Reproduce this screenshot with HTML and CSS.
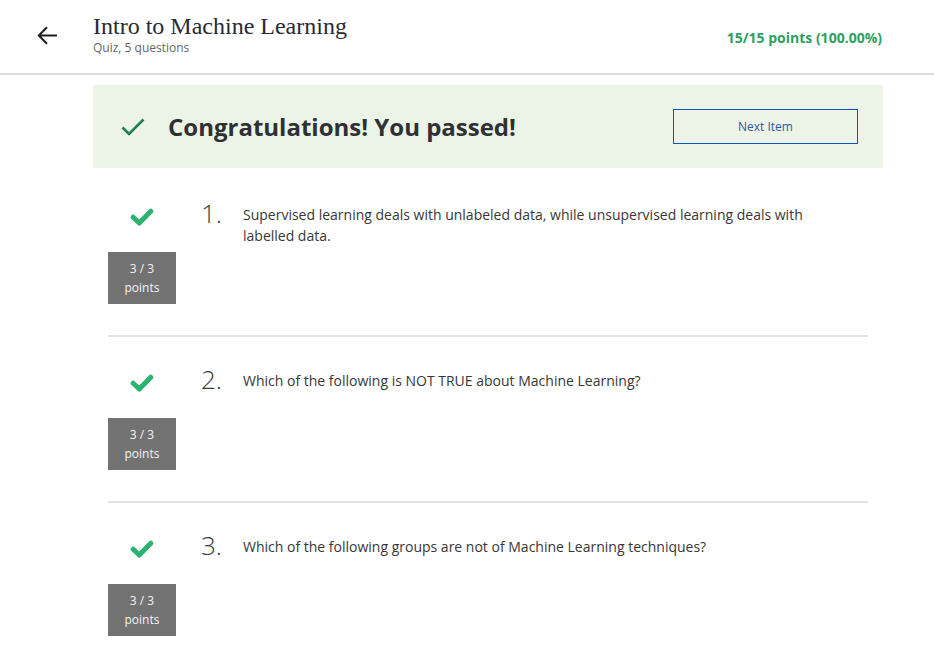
FILE: index.html
```html
<!DOCTYPE html>
<html lang="en">
<head>
<meta charset="utf-8">
<title>Intro to Machine Learning</title>
<link rel="stylesheet" href="styles.css">
</head>
<body>
<header class="topbar">
  <a class="back" href="#" aria-label="Back">
    <svg width="20" height="20" viewBox="0 0 20 20"><path d="M10 1.2 L1.8 9.5 L10 17.8 M1.8 9.5 H20" fill="none" stroke="#1f1f1f" stroke-width="2"/></svg>
  </a>
  <div class="titles">
    <h1 class="title">Intro to Machine Learning</h1>
    <div class="subtitle">Quiz, 5 questions</div>
  </div>
  <div class="score">15/15 points (100.00%)</div>
</header>

<main class="content">
  <section class="banner">
    <svg class="banner-check" width="24" height="18" viewBox="0 0 24 18"><polyline points="1.5,9.5 8,16 22.5,1.5" fill="none" stroke="#1f7f4f" stroke-width="2.6"/></svg>
    <h2 class="banner-text">Congratulations! You passed!</h2>
    <button class="next-btn" type="button">Next Item</button>
  </section>

  <div class="questions">
    <div class="question">
      <div class="q-side">
        <div class="q-icon"><svg width="24" height="18" viewBox="0 0 24 18"><polyline points="3.2,9.2 9.3,15 20.8,3.2" fill="none" stroke="#2bb370" stroke-width="5" stroke-linecap="round" stroke-linejoin="round"/></svg></div>
        <div class="q-points">3 / 3<br>points</div>
      </div>
      <div class="q-body">
        <div class="q-num">1.</div>
        <div class="q-text">Supervised learning deals with unlabeled data, while unsupervised learning deals with labelled data.</div>
      </div>
    </div>
    <div class="question">
      <div class="q-side">
        <div class="q-icon"><svg width="24" height="18" viewBox="0 0 24 18"><polyline points="3.2,9.2 9.3,15 20.8,3.2" fill="none" stroke="#2bb370" stroke-width="5" stroke-linecap="round" stroke-linejoin="round"/></svg></div>
        <div class="q-points">3 / 3<br>points</div>
      </div>
      <div class="q-body">
        <div class="q-num">2.</div>
        <div class="q-text">Which of the following is NOT TRUE about Machine Learning?</div>
      </div>
    </div>
    <div class="question">
      <div class="q-side">
        <div class="q-icon"><svg width="24" height="18" viewBox="0 0 24 18"><polyline points="3.2,9.2 9.3,15 20.8,3.2" fill="none" stroke="#2bb370" stroke-width="5" stroke-linecap="round" stroke-linejoin="round"/></svg></div>
        <div class="q-points">3 / 3<br>points</div>
      </div>
      <div class="q-body">
        <div class="q-num">3.</div>
        <div class="q-text">Which of the following groups are not of Machine Learning techniques?</div>
      </div>
    </div>
  </div>
</main>
</body>
</html>
```
FILE: styles.css
```css
* { box-sizing: border-box; }
html, body { margin: 0; padding: 0; background: #fff; }
body {
  font-family: "Open Sans", "Liberation Sans", sans-serif;
  color: #333;
  width: 934px;
  height: 646px;
  overflow: hidden;
}

.topbar {
  display: flex;
  align-items: flex-start;
  height: 75px;
  padding: 12px 52px 0 37px;
  border-bottom: 2px solid #dcdcdc;
}
.back {
  display: block;
  width: 20px;
  height: 20px;
  margin-top: 14px;
  margin-right: 36px;
}
.back svg { display: block; }
.titles { flex: 1; }
.title {
  margin: 0;
  font-family: "Liberation Serif", "DejaVu Serif", serif;
  font-weight: 400;
  font-size: 24px;
  line-height: 28px;
  color: #2a2b33;
}
.subtitle {
  font-size: 12px;
  line-height: 16px;
  color: #666;
}
.score {
  margin-top: 16px;
  font-size: 14px;
  line-height: 19px;
  font-weight: 700;
  color: #2e9f60;
}

.content {
  margin: 10px 0 0 93px;
  width: 790px;
}
.banner {
  display: flex;
  align-items: center;
  height: 83px;
  padding: 0 25px 0 28px;
  background: #ebf4e6;
}
.banner-check { display: block; flex: none; margin-right: 23px; }
.banner-text {
  flex: 1;
  margin: 0;
  font-size: 24px;
  line-height: 32px;
  font-weight: 700;
  color: #2f3033;
}
.next-btn {
  width: 185px;
  height: 35px;
  background: transparent;
  border: 1px solid #0b55c4;
  border-radius: 0;
  font-family: "Open Sans", "Liberation Sans", sans-serif;
  font-size: 12px;
  color: #34589e;
  padding: 0;
}

.questions { margin: 3px 15px 0; }
.question {
  display: flex;
  padding: 31px 0 31px;
  border-bottom: 2px solid #e2e2e2;
}
.q-side {
  width: 68px;
  flex: none;
  margin-right: 25px;
}
.q-icon {
  height: 30px;
  display: flex;
  align-items: center;
  justify-content: center;
}
.q-icon svg { display: block; }
.q-points {
  margin-top: 20px;
  height: 52px;
  padding: 7px 0;
  background: #727272;
  color: #f2f2f2;
  font-size: 12px;
  line-height: 19px;
  text-align: center;
}
.q-body {
  flex: 1;
  display: flex;
  align-items: flex-start;
}
.q-num {
  width: 42px;
  flex: none;
  margin-top: -2px;
  font-size: 26px;
  line-height: 26px;
  font-weight: 300;
  color: #3a3a3a;
}
.q-text {
  margin-top: 2px;
  max-width: 590px;
  font-size: 14px;
  line-height: 21px;
  color: #373737;
}
```
